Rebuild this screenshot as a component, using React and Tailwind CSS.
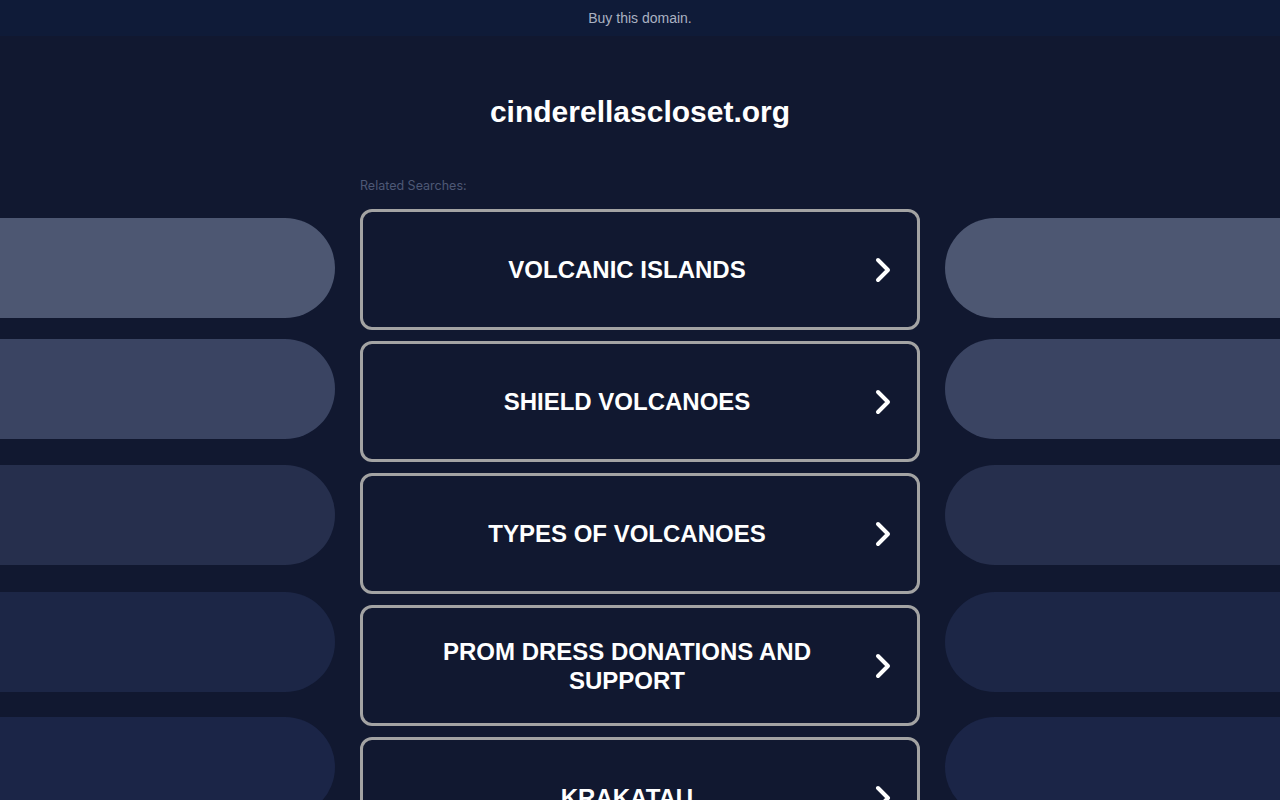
import React from 'react';

const searches = [
    'VOLCANIC ISLANDS',
    'SHIELD VOLCANOES',
    'TYPES OF VOLCANOES',
    'PROM DRESS DONATIONS AND SUPPORT',
    'KRAKATAU',
];

// side pills, top offset relative to previous pill
const pills = [
    { color: 'bg-[#4d5772]', mt: 'mt-0' },
    { color: 'bg-[#3a4462]', mt: 'mt-[21px]' },
    { color: 'bg-[#262f4d]', mt: 'mt-[26px]' },
    { color: 'bg-[#1c2646]', mt: 'mt-[27px]' },
    { color: 'bg-[#1b2547]', mt: 'mt-[25px]' },
];

function Chevron() {
    return (
        <svg width="18" height="28" viewBox="0 0 18 28" fill="none">
            <path d="M4 4 L14 14 L4 24" stroke="white" strokeWidth="4" strokeLinecap="round" strokeLinejoin="round" />
        </svg>
    );
}

function SearchButton({ label }) {
    return (
        <div className="relative h-[121px] w-full shrink-0 rounded-[12px] border-[3px] border-[#a3a3a3] bg-[#111830] flex items-center pl-[70px] pr-[96px] cursor-pointer">
            <div className="flex-1 text-center text-white font-bold text-[24px] leading-[29px]">{label}</div>
            <div className="absolute right-[25px] top-1/2 -translate-y-1/2 flex">
                <Chevron />
            </div>
        </div>
    );
}

function PillColumn({ side }) {
    return (
        <div className="flex flex-col pt-[182px] w-[335px] shrink-0">
            {pills.map((p, i) => (
                <div
                    key={i}
                    className={`${p.color} ${p.mt} h-[100px] shrink-0 ${side === 'left' ? 'rounded-r-[50px]' : 'rounded-l-[50px]'}`}
                />
            ))}
        </div>
    );
}

export default function App() {
    return (
        <div className="w-full h-[800px] overflow-hidden bg-[#111830] font-['Liberation_Sans',Arial,sans-serif]">
            <div className="h-[36px] bg-[#0f1b38] flex items-center justify-center text-[14px] text-[#aab2c2]">
                Buy this domain.
            </div>
            <div className="flex justify-between">
                <PillColumn side="left" />
                <div className="w-[560px] shrink-0 pt-[58px]">
                    <h1 className="text-center text-white font-bold text-[30px] leading-[36px]">cinderellascloset.org</h1>
                    <div className="mt-[48px] text-[12.5px] leading-[15px] text-[#4e5876] font-['Inter',sans-serif] mb-[16px]">Related Searches:</div>
                    <div className="flex flex-col gap-[11px]">
                        {searches.map((s) => (
                            <SearchButton key={s} label={s} />
                        ))}
                    </div>
                </div>
                <PillColumn side="right" />
            </div>
        </div>
    );
}
